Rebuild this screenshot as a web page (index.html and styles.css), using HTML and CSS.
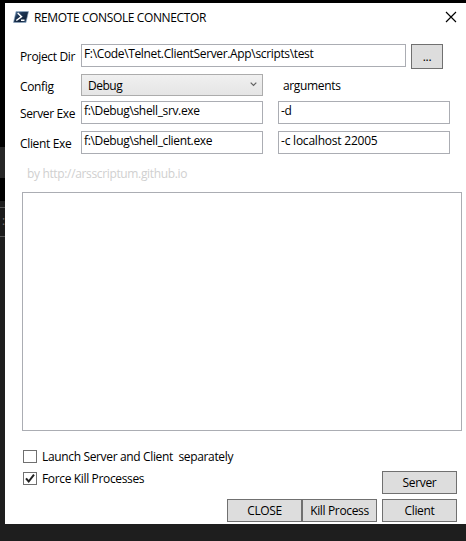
FILE: index.html
```html
<!DOCTYPE html>
<html lang="en">
<head>
<meta charset="utf-8">
<title>Remote Console Connector</title>
<link rel="stylesheet" href="styles.css">
</head>
<body>
<div class="backdrop">
  <div class="edge-top"></div>
  <div class="edge-tab"></div>
  <div class="edge-mid"></div>
  <div class="edge-field">:</div>
</div>
<main class="window">
  <header class="titlebar">
    <svg class="logo" width="16" height="12" viewBox="0 0 16 12">
      <defs><linearGradient id="g" x1="0" y1="0" x2="1" y2="1"><stop offset="0" stop-color="#5b7fa6"/><stop offset=".35" stop-color="#1d3656"/><stop offset=".7" stop-color="#13243c"/><stop offset="1" stop-color="#4a739d"/></linearGradient></defs>
      <path d="M3 .5H15.5L13 11.500H.5Z" fill="url(#g)" stroke="#8fa9c4" stroke-width=".6"/>
      <path d="M4.700 2 8.500 5.700 3.300 9.500M8 9.300H11.500" fill="none" stroke="#fff" stroke-width="1.500"/>
    </svg>
    <h1 class="title">REMOTE CONSOLE CONNECTOR</h1>
    <svg class="close" width="12" height="12" viewBox="0 0 12 12"><path d="M1 1 11 11M11 1 1 11" stroke="#000" stroke-width="1.150"/></svg>
  </header>
  <section class="form">
    <div class="row row-dir">
      <label class="label">Project Dir</label>
      <div class="input dir">F:\Code\Telnet.ClientServer.App\scripts\test</div>
      <button class="button browse">...</button>
    </div>
    <div class="row row-config">
      <label class="label">Config</label>
      <div class="select"><span class="value">Debug</span><svg width="7" height="5" viewBox="0 0 7 5"><path d="M.7.700 3.500 3.500 6.300.700" fill="none" stroke="#606060" stroke-width="1.200"/></svg></div>
      <span class="heading">arguments</span>
    </div>
    <div class="row row-exe">
      <label class="label">Server Exe</label>
      <div class="input exe">f:\Debug\shell_srv.exe</div>
      <div class="input args">-d</div>
    </div>
    <div class="row row-exe">
      <label class="label">Client Exe</label>
      <div class="input exe">f:\Debug\shell_client.exe</div>
      <div class="input args options">-c localhost 22005</div>
    </div>
  </section>
  <p class="credit">by http://arsscriptum.github.io</p>
  <div class="output"></div>
  <footer class="footer">
    <div class="checks">
      <label class="check"><span class="box"></span><span>Launch Server and Client&nbsp; separately</span></label>
      <label class="check"><span class="box"><svg width="12" height="11" viewBox="0 0 12 11"><path d="M2 5.300 4.700 8.500 10 1.700" fill="none" stroke="#212121" stroke-width="2"/></svg></span><span>Force Kill Processes</span></label>
    </div>
    <div class="actions">
      <button class="button action server">Server</button>
      <button class="button action shut">CLOSE</button>
      <button class="button action kill">Kill Process</button>
      <button class="button action client">Client</button>
    </div>
  </footer>
</main>
</body>
</html>
```
FILE: styles.css
```css
* { box-sizing: border-box; }
body {
  margin: 0;
  width: 466px;
  height: 541px;
  padding: 3px 0 0 5px;
  overflow: hidden;
  background: #1e1e1e;
  color: #000;
  font: 12px/16px "Open Sans", "Noto Sans", sans-serif;
  letter-spacing: -.35px;
}
.backdrop { position: absolute; left: 0; top: 0; width: 466px; z-index: -1; }
.edge-top { height: 147px; background: #000; }
.edge-tab { height: 31px; background: #272727; }
.edge-mid { height: 23px; background: #000; }
.edge-field {
  width: 5px;
  height: 30px;
  margin-top: 6px;
  padding: 5px 0 0 2px;
  overflow: hidden;
  border: solid #555;
  border-width: 1px 0;
  background: #1b1b1b;
  color: #777;
}
.window { width: 461px; height: 521px; background: #fff; }
.titlebar { display: flex; height: 41px; padding: 0 9px 0 8px; }
.logo { margin: 8px 5px 0 0; }
.title { margin: 7px auto 0 0; font: inherit; white-space: nowrap; letter-spacing: -.38px; }
.close { margin-top: 8px; }
.row { display: flex; align-items: flex-start; white-space: nowrap; }
.row-dir { height: 30px; }
.row-config { height: 27px; }
.row-exe { height: 30px; }
.label { width: 76px; padding: 5px 0 0 15px; }
.input { height: 23px; border: 1px solid #abadb3; padding: 1px 0 0 2px; }
.dir { width: 325px; }
.exe { width: 182px; }
.args { width: 172px; margin-left: 15px; }
.options { letter-spacing: -.22px; }
.button {
  padding: 0;
  border: 1px solid #707070;
  background: #ddd;
  color: #000;
  font: inherit;
  letter-spacing: inherit;
  white-space: nowrap;
}
.browse { width: 32px; height: 25px; margin-left: 5px; }
.select {
  display: flex;
  justify-content: space-between;
  width: 182px;
  height: 22px;
  padding: 3px 5px 0 6px;
  border: 1px solid #acacac;
  background: linear-gradient(#f0f0f0, #e5e5e5);
}
.select svg { margin-top: 4px; }
.value { letter-spacing: -.5px; }
.heading { padding: 4px 0 0 20px; }
.credit { height: 31px; margin: 0; padding: 5px 0 0 22px; color: #d0d0d0; white-space: nowrap; }
.output { width: 440px; height: 239px; margin-left: 17px; border: 1px solid #abadb3; }
.footer { display: flex; justify-content: space-between; height: 93px; }
.checks { padding: 18px 0 0 18px; }
.check { display: flex; height: 22px; white-space: nowrap; }
.box { width: 14px; height: 13px; margin: 1px 5px 0 0; border: 1px solid #707070; }
.box svg { display: block; }
.actions {
  display: grid;
  grid-template: 23px 23px / 75px 80px 75px;
  row-gap: 5px;
  margin-left: -40px;
  padding: 40px 9px 0 0;
}
.action { width: 75px; height: 23px; }
.server { grid-column: 3; }
.shut, .kill, .client { grid-row: 2; }
```
